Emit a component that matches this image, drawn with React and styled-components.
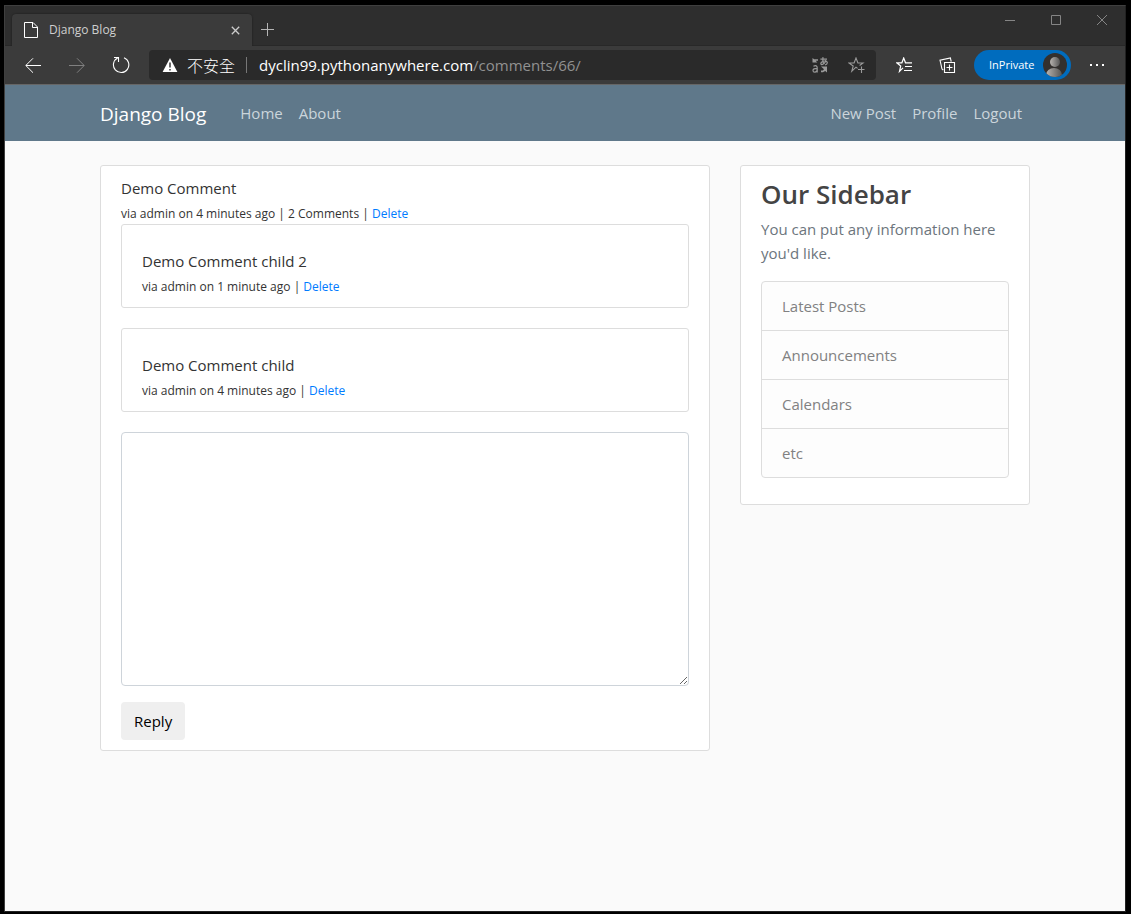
import React from "react";
import styled, { createGlobalStyle } from "styled-components";

const GlobalStyle = createGlobalStyle`
  *, *::before, *::after { box-sizing: border-box; }
  body {
    margin: 0;
    background: #000;
    color: #333;
    font-family: "Open Sans", "Noto Sans", "Noto Sans CJK TC", sans-serif;
    font-size: 15px;
    line-height: 24px;
  }
  button, textarea, input { font: inherit; }
  a { text-decoration: none; }
`;

const Desktop = styled.div`
  display: flex;
  min-height: 100vh;
  padding: 5px 5px 2px 4px;
`;

const Window = styled.div`
  flex: 1;
  min-width: 0;
  display: flex;
  flex-direction: column;
  border: 1px solid #3f3f3f;
  border-right-color: #222;
  border-bottom-color: #222;
  background: #fafafa;
`;

/* Browser chrome */
const TabStrip = styled.div`
  display: flex;
  height: 40px;
  padding-left: 7px;
  background: #2e2e2e;
  box-shadow: inset 0 -1px 0 #282828;
`;

const Tab = styled.div`
  display: flex;
  align-items: center;
  width: 240px;
  margin-top: 8px;
  padding: 0 8px 0 12px;
  border-radius: 4px 4px 0 0;
  background: #3b3b3b;
  box-shadow: 0 0 2px #1a1a1a;
  clip-path: inset(-2px -2px 0 -2px);
  color: #cfcfcf;
  font-size: 12px;
`;

const TabTitle = styled.span`
  flex: 1;
  margin-left: 11px;
`;

const IconButton = styled.button`
  display: inline-flex;
  align-items: center;
  justify-content: center;
  flex: none;
  width: ${(p) => p.$width || 32}px;
  height: ${(p) => p.$height || 30}px;
  padding: 0;
  border: 0;
  background: none;
  color: ${(p) => p.$color || "#fff"};
`;

const WindowControls = styled.div`
  display: flex;
  height: 28px;
  margin-left: auto;
`;

const Toolbar = styled.div`
  display: flex;
  align-items: center;
  height: 39px;
  padding: 0 12px;
  border-bottom: 1px solid #666;
  background: #3b3b3b;
`;

const AddressBar = styled.div`
  flex: 1;
  min-width: 0;
  display: flex;
  align-items: center;
  height: 30px;
  margin: 0 12px;
  padding: 0 2px 0 13px;
  border-radius: 4px;
  background: #2a2a2a;
  color: #fff;
`;

const Security = styled.span`
  display: flex;
  align-items: center;
  gap: 9px;
  height: 16px;
  padding-right: 11px;
  margin-right: 12px;
  border-right: 1px solid #777;
  font-family: "Noto Sans CJK TC", sans-serif;
  font-size: 16px;
  font-weight: 300;
  white-space: nowrap;
`;

const Url = styled.span`
  flex: 1;
  min-width: 0;
  overflow: hidden;
  white-space: nowrap;
`;

const UrlPath = styled.span`
  color: #919191;
`;

const ProfileButton = styled.button`
  display: flex;
  align-items: center;
  justify-content: space-between;
  flex: none;
  width: 97px;
  height: 30px;
  margin: 0 10px 0 0;
  padding: 0 4px 0 15px;
  border: 0;
  border-radius: 15px;
  background: #006cbe;
  color: #fff;
  && { font-size: 11px; }
`;

/* Blog page */
const Container = styled.div`
  width: 100%;
  max-width: 960px;
  margin: 0 auto;
  padding: 0 15px;
`;

const NavBar = styled.header`
  background: #5f788a;
`;

const NavContent = styled(Container)`
  display: flex;
  align-items: center;
  min-height: 56px;
`;

const Brand = styled.a`
  margin-right: 26px;
  padding-top: 2px;
  color: #fff;
  font-size: 19px;
`;

const NavLinks = styled.nav`
  display: flex;
  margin-left: ${(p) => (p.$end ? "auto" : "0")};
`;

const NavLink = styled.a`
  padding: 8px;
  color: #cbd5db;
`;

const Columns = styled(Container)`
  display: grid;
  grid-template-columns: minmax(0, 610fr) minmax(0, 290fr);
  align-items: start;
  gap: 30px;
  padding-top: 24px;
  padding-bottom: 24px;
  @media (max-width: 768px) {
    grid-template-columns: minmax(0, 1fr);
  }
`;

const Card = styled.section`
  padding: 10px 20px;
  border: 1px solid #ddd;
  border-radius: 3px;
  background: #fff;
`;

const Reply = styled.article`
  margin-bottom: 20px;
  padding: 24px 20px 10px;
  border: 1px solid #ddd;
  border-radius: 3px;
`;

const CommentText = styled.p`
  margin: 0;
`;

const Meta = styled.div`
  padding-top: 2px;
  margin-bottom: -2px;
  font-size: 12px;
`;

const DeleteLink = styled.a`
  color: #007bff;
`;

const ReplyBox = styled.textarea`
  display: block;
  width: 100%;
  height: 254px;
  margin-bottom: 16px;
  padding: 6px 12px;
  border: 1px solid #ced4da;
  border-radius: 4px;
  background: #fff;
  resize: vertical;
`;

const ReplyButton = styled.button`
  display: block;
  height: 38px;
  padding: 0 13px;
  border: 0;
  border-radius: 4px;
  background: #efefef;
  color: #000;
`;

const SidebarTitle = styled.h3`
  margin: 0 0 6px;
  padding-top: 2px;
  color: #444;
  font-size: 26px;
  font-weight: 600;
  line-height: 33px;
`;

const SidebarText = styled.p`
  margin: 0 0 16px;
  color: #6c757d;
`;

const SidebarList = styled.ul`
  margin: 0 0 16px;
  padding: 0;
  border: 1px solid #ddd;
  border-radius: 4px;
  background: #fdfdfd;
  color: #818182;
  list-style: none;
`;

const SidebarItem = styled.li`
  padding: 12px 20px;
  & + & { border-top: 1px solid #ddd; }
`;

function Icon({ w = 18, h = w, children, ...rest }) {
  return (
    <svg width={w} height={h} viewBox={`0 0 ${w} ${h}`} fill="none" stroke="currentColor" aria-hidden="true" {...rest}>
      {children}
    </svg>
  );
}

const PageIcon = () => (
  <Icon w={14} h={17} color="#fff">
    <path d="M.5 .5H9L13.5 5V15.5H.5ZM8.5 .5V5.5H13.5" />
  </Icon>
);
const CloseTab = () => (
  <Icon w={9}><path d="M.8 .8 8.2 8.2M8.2 .8 .8 8.2" strokeWidth="1.3" /></Icon>
);
const Plus = () => <Icon w={13}><path d="M6.5 0V13M0 6.5H13" /></Icon>;
const Minimize = () => <Icon w={10}><path d="M0 5.5H10" /></Icon>;
const Maximize = () => <Icon w={10}><path d="M.5 .5H9.5V9.5H.5Z" /></Icon>;
const CloseWindow = () => <Icon w={10}><path d="M0 0 10 10M10 0 0 10" /></Icon>;
const Back = () => <Icon w={16}><path d="M16 8.5H1M8 1.3 .8 8.5 8 15.7" /></Icon>;
const Forward = () => <Icon w={16}><path d="M0 8.5H15M8 1.3 15.2 8.5 8 15.7" /></Icon>;
const Refresh = () => (
  <Icon w={18}><path d="M12 1.7A7.7 7.7 0 1 1 5.6 2M2 1.5H6.5V6" strokeWidth="1.1" /></Icon>
);
const Warning = () => (
  <Icon w={16} h={16}>
    <path d="M8 1 15.4 15H.6Z" fill="currentColor" stroke="none" />
    <path d="M8 5.5V10.5M8 12V13.5" stroke="#2a2a2a" strokeWidth="1.4" />
  </Icon>
);
const Translate = () => (
  <Icon w={16}>
    <path d="M.5 1 2.2 2.3H6V3.8H3.7L5.3 5.5H.5ZM9 9.5H15V15.5L13.2 13.9 11 15.2H9V13.6H10.8L12 12.2Z" fill="currentColor" stroke="none" />
    <path d="M1.4 9.3Q5.2 7.6 5.2 10.8V15.4M5.2 11.4Q1 11.3 1 13.4 1 15.2 2.8 15.2 5.2 15 5.2 12.6M8.4 2.2H15M11 .2C10.4 3 10.8 5.2 12 7.2M14 3.2C13.5 6 10.8 8 9.3 7.4 7.6 6.4 10.5 3.8 13 4 16.2 4.3 16 7.2 13 8" strokeWidth="1.2" />
  </Icon>
);
const StarAdd = () => (
  <Icon w={17}>
    <path d="M9.6 11.4 8 10.2 3.8 14.2 5.2 9 1 6H6.1L8 1 9.9 6H15L11.6 8.5M13.5 9.5V16M10 12.5H16.5" strokeWidth="1.1" />
  </Icon>
);
const Favorites = () => (
  <Icon w={17}>
    <path d="M7 10.8 3.5 14.3 4.7 9 .8 5.8H5.9L7.7 1 9.5 5.8H16M9 9.5H16M8 13.5H16" strokeWidth="1.2" />
  </Icon>
);
const Collections = () => (
  <Icon w={17}>
    <path d="M5.5 5.5H15.5V15.5H5.5ZM10.5 7.5V13.5M7.5 10.5H13.5M4.3 13 3 12 1 3.2 11.4 1 12.2 4.6" strokeWidth="1.1" />
  </Icon>
);
const More = () => (
  <Icon w={16} h={4}>
    <path d="M1 1H3V3H1ZM7 1H9V3H7ZM13 1H15V3H13Z" fill="currentColor" stroke="none" />
  </Icon>
);
const Avatar = () => (
  <Icon w={24} stroke="none">
    <defs>
      <linearGradient id="shade"><stop stopColor="#b8b4b0" /><stop offset="1" stopColor="#555" /></linearGradient>
      <clipPath id="round"><circle cx="12" cy="12" r="12" /></clipPath>
    </defs>
    <circle cx="12" cy="12" r="12" fill="#33302e" />
    <circle cx="12" cy="9" r="5" fill="url(#shade)" />
    <ellipse cx="11" cy="22" rx="8" ry="7" fill="url(#shade)" clipPath="url(#round)" />
  </Icon>
);

function Browser({ children }) {
  return (
    <Window>
      <TabStrip>
        <Tab>
          <PageIcon />
          <TabTitle>Django Blog</TabTitle>
          <IconButton $width={18} $height={18} $color="#ccc" aria-label="Close tab"><CloseTab /></IconButton>
        </Tab>
        <IconButton $width={30} $height={47} $color="#b5b5b5" aria-label="New tab"><Plus /></IconButton>
        <WindowControls>
          <IconButton $width={46} $height={28} $color="#858585" aria-label="Minimize"><Minimize /></IconButton>
          <IconButton $width={46} $height={28} $color="#858585" aria-label="Maximize"><Maximize /></IconButton>
          <IconButton $width={46} $height={28} $color="#858585" aria-label="Close"><CloseWindow /></IconButton>
        </WindowControls>
      </TabStrip>
      <Toolbar>
        <IconButton aria-label="Back"><Back /></IconButton>
        <IconButton $width={56} $color="#808080" aria-label="Forward"><Forward /></IconButton>
        <IconButton aria-label="Refresh"><Refresh /></IconButton>
        <AddressBar>
          <Security><Warning />不安全</Security>
          <Url>dyclin99.pythonanywhere.com<UrlPath>/comments/66/</UrlPath></Url>
          <IconButton $width={36} $color="#999" aria-label="Translate"><Translate /></IconButton>
          <IconButton $width={36} $color="#999" aria-label="Add to favorites"><StarAdd /></IconButton>
        </AddressBar>
        <IconButton aria-label="Favorites"><Favorites /></IconButton>
        <IconButton $width={54} aria-label="Collections"><Collections /></IconButton>
        <ProfileButton>InPrivate<Avatar /></ProfileButton>
        <IconButton aria-label="More"><More /></IconButton>
      </Toolbar>
      {children}
    </Window>
  );
}

const replies = [
  { text: "Demo Comment child 2", age: "1 minute" },
  { text: "Demo Comment child", age: "4 minutes" },
];
const sections = ["Latest Posts", "Announcements", "Calendars", "etc"];

export default function App() {
  return (
    <Desktop>
      <GlobalStyle />
      <Browser>
        <NavBar>
          <NavContent>
            <Brand href="#home">Django Blog</Brand>
            <NavLinks>
              <NavLink href="#home">Home</NavLink>
              <NavLink href="#about">About</NavLink>
            </NavLinks>
            <NavLinks $end>
              <NavLink href="#new">New Post</NavLink>
              <NavLink href="#profile">Profile</NavLink>
              <NavLink href="#logout">Logout</NavLink>
            </NavLinks>
          </NavContent>
        </NavBar>
        <Columns as="main">
          <Card>
            <CommentText>Demo Comment</CommentText>
            <Meta>
              via admin on 4 minutes ago | 2 Comments | <DeleteLink href="#delete">Delete</DeleteLink>
            </Meta>
            {replies.map((reply) => (
              <Reply key={reply.text}>
                <CommentText>{reply.text}</CommentText>
                <Meta>
                  via admin on {reply.age} ago | <DeleteLink href="#delete">Delete</DeleteLink>
                </Meta>
              </Reply>
            ))}
            <form>
              <ReplyBox aria-label="Reply text" />
              <ReplyButton type="button">Reply</ReplyButton>
            </form>
          </Card>
          <Card as="aside">
            <SidebarTitle>Our Sidebar</SidebarTitle>
            <SidebarText>You can put any information here you'd like.</SidebarText>
            <SidebarList>
              {sections.map((name) => (
                <SidebarItem key={name}>{name}</SidebarItem>
              ))}
            </SidebarList>
          </Card>
        </Columns>
      </Browser>
    </Desktop>
  );
}
